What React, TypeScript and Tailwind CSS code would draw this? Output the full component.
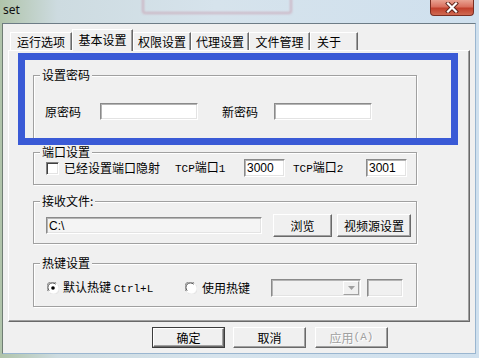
import React from "react";

const TABS = [
  { label: "运行选项", w: "w-[62px]" },
  { label: "基本设置", w: "w-[61px]", active: true },
  { label: "权限设置", w: "w-[58px]" },
  { label: "代理设置", w: "w-[58px]" },
  { label: "文件管理", w: "w-[61px]" },
  { label: "关于", w: "w-[48px]", left: true },
];

function Group({ label, className, children }: { label: string; className: string; children?: React.ReactNode }) {
  return (
    <div className={`relative border border-[#a0a0a0] shadow-[inset_1px_1px_0_#fff,1px_1px_0_#fff] ${className}`}>
      <span className="absolute -top-[8px] left-[6px] bg-[#f0f0f0] px-[2px] leading-[14px]">{label}</span>
      {children}
    </div>
  );
}

function Edit({ className, children }: { className: string; children?: React.ReactNode }) {
  return (
    <div
      className={`flex items-center border border-t-[#8a8a8a] border-l-[#8a8a8a] border-r-white border-b-white pl-[2px] font-['Liberation_Sans',sans-serif] text-[12px] leading-none shadow-[inset_1px_1px_0_#b4b4b4,inset_-1px_-1px_0_#e3e3e3] ${className}`}
    >
      {children}
    </div>
  );
}

function Btn({ className, children, def, disabled }: { className: string; children: React.ReactNode; def?: boolean; disabled?: boolean }) {
  return (
    <div className={`${def ? "border border-[#3c3c3c]" : ""} ${className}`}>
      <div
        className={`flex h-full w-full items-center justify-center border border-t-white border-l-white border-r-[#696969] border-b-[#696969] shadow-[inset_-1px_-1px_0_#a0a0a0] ${
          disabled ? "text-[#a0a0a0] [text-shadow:1px_1px_0_#fff]" : "text-black"
        }`}
      >
        {children}
      </div>
    </div>
  );
}

function Radio({ checked }: { checked?: boolean }) {
  return (
    <svg width="12" height="12" viewBox="0 0 12 12" className="shrink-0">
      <circle cx="6" cy="6" r="5.5" fill="#fff" />
      <path d="M1.2 9.2 A5.3 5.3 0 0 1 9.2 1.2" stroke="#808080" strokeWidth="1" fill="none" />
      <path d="M2.2 8.6 A4.3 4.3 0 0 1 8.6 2.2" stroke="#404040" strokeWidth="1" fill="none" />
      <path d="M10.8 2.8 A5.3 5.3 0 0 1 2.8 10.8" stroke="#e3e3e3" strokeWidth="1" fill="none" />
      {checked && <circle cx="6" cy="6" r="1.8" fill="#000" />}
    </svg>
  );
}

export default function App() {
  return (
    <div className="relative h-[358px] w-[479px] overflow-hidden bg-[linear-gradient(90deg,#b0c4aa_0%,#cddbe0_12%,#d6e3ec_45%,#cfe0ee_100%)] font-['Noto_Sans_CJK_SC',sans-serif] text-[12px] text-black">
      {/* blurred window behind the title bar */}
      <div className="absolute left-[142px] -top-[6px] h-[20px] w-[150px] rounded-[3px] border-2 border-[#c9a0b0] opacity-70 blur-[1px]" />

      <div className="flex h-[23px] items-start">
        <span className="pl-[3px] pt-[3px] font-['Noto_Sans',sans-serif] text-[12px] leading-[14px] text-[#111]">set</span>
        <div className="ml-auto mr-[5px] flex h-[16px] w-[44px] items-center justify-center rounded-b-[4px] border border-t-0 border-[#7a2e22] bg-[linear-gradient(180deg,#e9a292_0%,#d9705e_45%,#c1402c_55%,#cf6a52_100%)]">
          <svg width="14" height="11" viewBox="0 0 14 11">
            <path d="M3 1.5 L11 9.5 M11 1.5 L3 9.5" stroke="#5a2018" strokeWidth="4" strokeLinecap="square" />
            <path d="M3 1.5 L11 9.5 M11 1.5 L3 9.5" stroke="#fff" strokeWidth="2.2" strokeLinecap="square" />
          </svg>
        </div>
      </div>

      <div className="ml-[2px] h-[331px] w-[474px] border border-t-[#6d7c86] border-l-[#6f7d74] border-r-[#9ab6d0] border-b-[#9ab6d0] bg-[#f0f0f0] pl-[5px] pt-[5px]">
        <div className="ml-[2px] flex h-[21px] items-end">
          {TABS.map((t) =>
            t.active ? (
              <div
                key={t.label}
                className={`relative z-10 -mb-[1px] flex h-[22px] items-center justify-center border border-b-0 border-t-white border-l-white border-r-[#696969] bg-[#f0f0f0] pb-[1px] shadow-[inset_-1px_0_0_#a0a0a0] ${t.w}`}
              >
                {t.label}
              </div>
            ) : (
              <div
                key={t.label}
                className={`flex h-[18px] items-center border border-b-0 border-t-white border-l-white border-r-[#696969] shadow-[inset_-1px_0_0_#a0a0a0] ${t.left ? "justify-start pl-[6px]" : "justify-center"} ${t.w}`}
              >
                {t.label}
              </div>
            )
          )}
        </div>

        <div className="h-[272px] w-[462px] border border-t-white border-l-white border-r-[#696969] border-b-[#696969] pl-[24px] pt-[24px] shadow-[inset_-1px_-1px_0_#a0a0a0]">
          <Group label="设置密码" className="h-[64px] w-[384px]">
            <div className="mt-[27px] flex h-[17px] items-center pl-[11px]">
              <span className="w-[36px] shrink-0">原密码</span>
              <Edit className="ml-[19px] h-[17px] w-[98px] bg-white" />
              <span className="ml-[24px] w-[36px] shrink-0">新密码</span>
              <Edit className="ml-[16px] h-[17px] w-[98px] bg-white" />
            </div>
          </Group>

          <Group label="端口设置" className="mt-[13px] h-[33px] w-[384px]">
            <div className="mt-[6px] flex h-[18px] items-center pl-[12px]">
              <div className="h-[13px] w-[13px] shrink-0 border border-t-[#808080] border-l-[#808080] border-r-white border-b-white bg-white shadow-[inset_1px_1px_0_#404040,inset_-1px_-1px_0_#e3e3e3]" />
              <span className="ml-[5px] w-[111px] shrink-0">已经设置端口隐射</span>
              <span className="w-[69px] shrink-0">
                <span className="font-['Liberation_Mono',monospace] text-[11px]">TCP</span>端口<span className="font-['Liberation_Mono',monospace] text-[11px]">1</span>
              </span>
              <Edit className="h-[18px] w-[41px] bg-white">3000</Edit>
              <span className="ml-[8px] w-[73px] shrink-0">
                <span className="font-['Liberation_Mono',monospace] text-[11px]">TCP</span>端口<span className="font-['Liberation_Mono',monospace] text-[11px]">2</span>
              </span>
              <Edit className="h-[18px] w-[41px] bg-white">3001</Edit>
            </div>
          </Group>

          <Group label="接收文件:" className="mt-[16px] h-[43px] w-[384px]">
            <div className="mt-[12px] flex h-[23px] items-center pl-[12px]">
              <Edit className="h-[17px] w-[216px] bg-[#f4f4f4] font-['Liberation_Mono',monospace] text-[11px]">C:\</Edit>
              <Btn className="ml-[11px] h-[23px] w-[59px]">浏览</Btn>
              <Btn className="ml-[5px] h-[23px] w-[74px]">视频源设置</Btn>
            </div>
          </Group>

          <Group label="热键设置" className="mt-[19px] h-[44px] w-[384px]">
            <div className="mt-[15px] flex h-[18px] items-center pl-[13px]">
              <Radio checked />
              <span className="ml-[4px] w-[122px] shrink-0">
                默认热键 <span className="font-['Liberation_Mono',monospace] text-[11px]">Ctrl+L</span>
              </span>
              <Radio />
              <span className="ml-[5px] w-[69px] shrink-0">使用热键</span>
              <Edit className="h-[18px] w-[90px] justify-end bg-[#f0f0f0] pl-0 pr-[1px]">
                <div className="flex h-[14px] w-[16px] items-center justify-center border border-t-white border-l-white border-r-[#a0a0a0] border-b-[#a0a0a0] bg-[#f0f0f0]">
                  <svg width="7" height="4" viewBox="0 0 7 4">
                    <path d="M0 0 H7 L3.5 4 Z" fill="#a0a0a0" />
                  </svg>
                </div>
              </Edit>
              <Edit className="ml-[6px] h-[18px] w-[36px] bg-[#f0f0f0]" />
            </div>
          </Group>
        </div>

        <div className="mt-[5px] flex h-[21px] pl-[144px]">
          <Btn def className="h-[21px] w-[73px]">确定</Btn>
          <Btn className="ml-[8px] h-[21px] w-[73px]">取消</Btn>
          <Btn disabled className="ml-[9px] h-[21px] w-[73px]">
            应用<span className="font-['Liberation_Mono',monospace] text-[11px]">(A)</span>
          </Btn>
        </div>
      </div>

      {/* annotation frame drawn over the password group */}
      <div className="pointer-events-none absolute left-[18px] top-[53px] h-[92px] w-[440px] border-[7px] border-[#3a5ad6]" />
    </div>
  );
}
